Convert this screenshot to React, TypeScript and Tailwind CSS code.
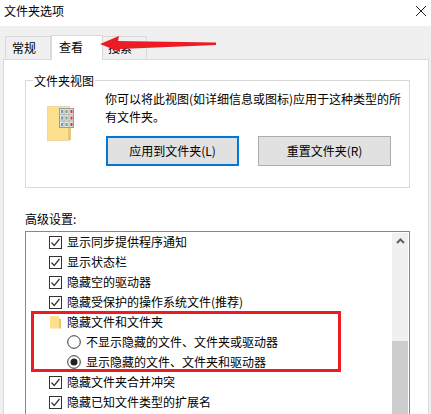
const ui = '"Noto Sans CJK SC", "Liberation Sans", sans-serif';

function Check() {
  return (
    <svg width="13" height="13" viewBox="0 0 13 13" className="shrink-0">
      <rect x="0.5" y="0.5" width="12" height="12" fill="#fff" stroke="#333" />
      <path d="M2.5 6.5 L5.2 9.5 L10.5 3" fill="none" stroke="#333" strokeWidth="1.2" />
    </svg>
  );
}

function Radio({ on }: { on?: boolean }) {
  return (
    <svg width="14" height="14" viewBox="0 0 14 14" className="shrink-0">
      <circle cx="7" cy="7" r="6.3" fill="#fff" stroke="#333" />
      {on && <circle cx="7" cy="7" r="3.5" fill="#222" />}
    </svg>
  );
}

function SmallFolder() {
  return (
    <svg width="13" height="13" viewBox="0 0 13 13" className="shrink-0">
      <path d="M1 0 H9 L11 3 V12.5 H1 Z" fill="#fde08e" />
      <path d="M10 3 H12 V12.5 H10 Z" fill="#ecc768" />
    </svg>
  );
}

function BigFolder() {
  return (
    <svg width="28" height="36" viewBox="0 0 28 36">
      <rect x="0.5" y="0.5" width="22" height="34" fill="#fde08e" stroke="#ead9a6" />
      <rect x="21" y="9" width="3" height="25" fill="#e6c878" />
      <rect x="12.5" y="2.5" width="14" height="19" fill="#e4e4e4" stroke="#9a9a9a" />
      <path d="M12.5 8.5 H26.5 M12.5 15 H26.5 M17 2.5 V21.5 M22 2.5 V21.5" stroke="#b5b5b5" />
      <rect x="14" y="4" width="2" height="3" fill="#6f9cc4" />
      <rect x="18.5" y="4" width="2" height="3" fill="#7f9f6f" />
      <rect x="23.5" y="4" width="2" height="3" fill="#cc3f38" />
      <rect x="14" y="10.5" width="2" height="3" fill="#6f9cc4" />
      <rect x="18.5" y="10.5" width="2" height="3" fill="#7f9f6f" />
      <rect x="23.5" y="10.5" width="2" height="3" fill="#cc3f38" />
      <rect x="14" y="17" width="2" height="3" fill="#6f9cc4" />
      <rect x="18.5" y="17" width="2" height="3" fill="#7f9f6f" />
      <rect x="23.5" y="17" width="2" height="3" fill="#cc3f38" />
    </svg>
  );
}

function CheckRow({ label }: { label: string }) {
  return (
    <div className="h-5 flex items-center gap-[5px] pl-[23px]">
      <Check />
      <span>{label}</span>
    </div>
  );
}

function RadioRow({ label, on }: { label: string; on?: boolean }) {
  return (
    <div className="h-5 flex items-center gap-[5px] pl-[41px]">
      <Radio on={on} />
      <span>{label}</span>
    </div>
  );
}

export default function App() {
  return (
    <div
      className="w-[431px] h-[414px] overflow-hidden relative bg-white text-[12px] leading-5 text-black"
      style={{ fontFamily: ui }}
    >
      {/* title bar */}
      <div className="h-[26px] flex items-center justify-between pl-1 pr-[3px] pb-[5px]">
        <span>文件夹选项</span>
        <svg width="12" height="12" viewBox="0 0 12 12" className="mr-[1px]">
          <path d="M1 1 L11 11 M11 1 L1 11" stroke="#222" strokeWidth="1" />
        </svg>
      </div>

      <div className="h-[388px] bg-[#f0f0f0] pt-[9px] pl-[3px] pr-[2px]">
        {/* tabs */}
        <div className="h-6 flex items-end pl-[2px] relative z-10">
          <div className="w-[46px] h-[22px] mb-[1px] border border-b-0 border-[#d9d9d9] bg-[#f0f0f0] flex items-center pl-[6px]">常规</div>
          <div className="w-[52px] h-[25px] -mb-[1px] border border-b-0 border-[#d9d9d9] bg-white flex items-center pl-[7px] pb-[2px]">查看</div>
          <div className="w-[44px] h-[22px] mb-[1px] border border-l-0 border-b-0 border-[#d9d9d9] bg-[#f0f0f0] flex items-center pl-[5px]">搜索</div>
        </div>

        {/* tab panel */}
        <div className="h-[355px] border border-b-0 border-[#d9d9d9] bg-white pl-[21px] pr-[18px] pt-[20px]">
          <div className="h-[108px] border border-[#d9d9d9] relative flex pl-[21px] pt-[9px]">
            <span className="absolute -top-[10px] left-[7px] bg-white px-[1px]">文件夹视图</span>
            <div className="w-[58px] pt-[16px] shrink-0">
              <BigFolder />
            </div>
            <div className="flex-1">
              <p className="w-[300px] leading-[18px]">你可以将此视图(如详细信息或图标)应用于这种类型的所有文件夹。</p>
              <div className="flex gap-[19px] mt-[10px] ml-[1px]">
                <button className="w-[133px] h-[30px] border-2 border-[#0078d7] bg-[#e1e1e1]">应用到文件夹(L)</button>
                <button className="w-[133px] h-[30px] border border-[#adadad] bg-[#e1e1e1]">重置文件夹(R)</button>
              </div>
            </div>
          </div>

          <div className="mt-[21px] mb-[2px] h-5">高级设置:</div>
          <div className="h-[200px] border border-[#828790] border-b-0 flex pr-[1px]">
            <div className="flex-1">
              <CheckRow label="显示同步提供程序通知" />
              <CheckRow label="显示状态栏" />
              <CheckRow label="隐藏空的驱动器" />
              <CheckRow label="隐藏受保护的操作系统文件(推荐)" />
              <div className="h-5 flex items-center gap-[5px] pl-[23px]">
                <SmallFolder />
                <span>隐藏文件和文件夹</span>
              </div>
              <RadioRow label="不显示隐藏的文件、文件夹或驱动器" />
              <RadioRow label="显示隐藏的文件、文件夹和驱动器" on />
              <CheckRow label="隐藏文件夹合并冲突" />
              <CheckRow label="隐藏已知文件类型的扩展名" />
            </div>
            {/* scrollbar */}
            <div className="w-[16px] mt-[1px] bg-[#f0f0f0] flex flex-col">
              <div className="h-[16px] flex items-center justify-center">
                <svg width="9" height="6" viewBox="0 0 9 6">
                  <path d="M1 5 L4.5 1.5 L8 5" fill="none" stroke="#606060" strokeWidth="2" />
                </svg>
              </div>
              <div className="mt-[92px] flex-1 bg-[#cdcdcd]" />
            </div>
          </div>
        </div>
      </div>

      {/* annotations */}
      <div className="absolute z-20 left-[31px] top-[311px] w-[310px] h-[61px] border-[3px] border-[#ed1c24]" />
      <svg className="absolute z-20 left-[98px] top-[34px]" width="120" height="20" viewBox="0 0 120 20">
        <path d="M2 10 L21 2 L20 7 L118 8.5 L118 11 L22 15 L22 18 Z" fill="#ed1c24" />
      </svg>
    </div>
  );
}
